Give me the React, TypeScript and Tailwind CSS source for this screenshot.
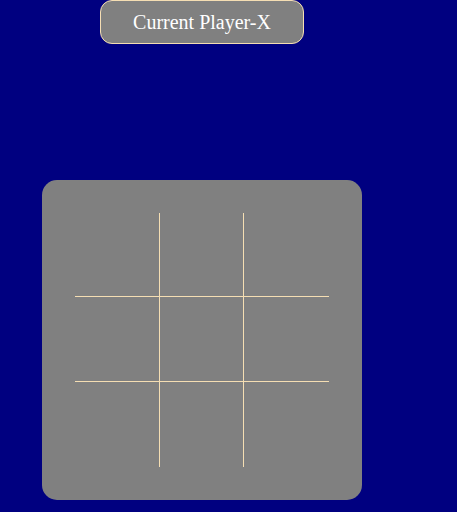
export default function App() {
  const cells = Array.from({ length: 9 }, (_, i) => i);

  return (
    <div className="w-full h-[512px] bg-[#000080] overflow-hidden font-['Liberation_Serif','Times_New_Roman',serif]">
      <div className="ml-[100px] w-[204px] h-[44px] flex items-center justify-center rounded-[12px] border border-[#f5deb3] bg-[#808080] text-[20px] text-white">
        Current Player-X
      </div>

      <div className="mt-[136px] ml-[42px] w-[320px] h-[320px] rounded-[15px] bg-[#808080] pt-[33px] pl-[33px]">
        <div className="grid grid-cols-[85px_84px_85px] grid-rows-[84px_85px_85px]">
          {cells.map((i) => {
            const col = i % 3;
            const row = Math.floor(i / 3);
            return (
              <div
                key={i}
                className={`${col < 2 ? 'border-r' : ''} ${row < 2 ? 'border-b' : ''} border-[#f5deb3]`}
              />
            );
          })}
        </div>
      </div>
    </div>
  );
}
